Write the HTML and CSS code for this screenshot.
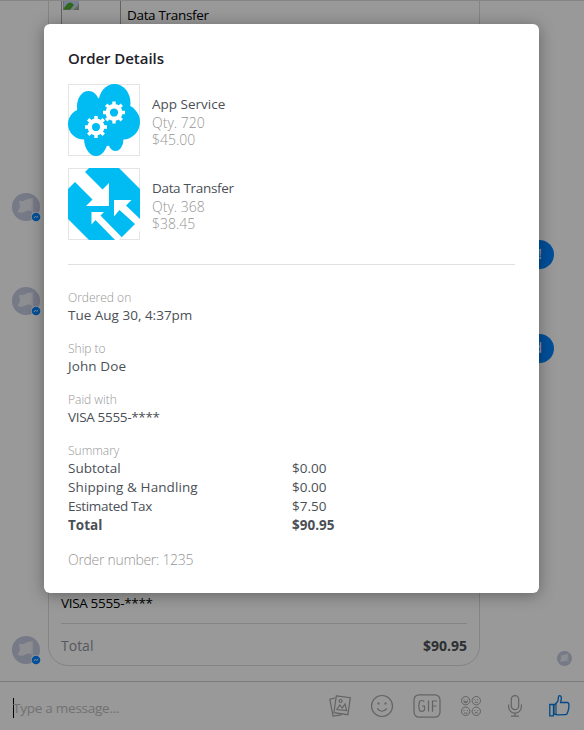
FILE: index.html
```html
<!DOCTYPE html>
<html lang="en">
<head>
<meta charset="utf-8">
<title>Order Details</title>
<link rel="stylesheet" href="styles.css">
</head>
<body>
<svg class="defs" width="0" height="0" aria-hidden="true">
  <defs>
    <symbol id="bot" viewBox="0 0 28 28">
      <circle cx="14" cy="14" r="14" fill="#c5cae0"/>
      <path d="M7 7.500q4 1.500 6.500-.5t6-1.500l1 .5-1 12.500q-3-2-6 0t-8 .5l2.500-5z" fill="#ebedf3"/>
      <path d="M20.500 5v17.500" stroke="#dfe2ec" stroke-width="1.400"/>
    </symbol>
    <symbol id="badge" viewBox="0 0 10 10">
      <circle cx="5" cy="5" r="5" fill="#fff"/>
      <circle cx="5" cy="5" r="4.300" fill="#0084ff"/>
      <path d="M2.800 6.100 4.500 4.200l1.200 1.200 1.600-1.300" fill="none" stroke="#fff" stroke-width=".9"/>
    </symbol>
    <g id="gear">
      <circle r="6.300" fill="none" stroke="#fff" stroke-width="4.400"/>
      <g stroke="#fff" stroke-width="3.400">
        <path d="M0-11v4M0 11V7M-11 0h4M11 0H7"/>
        <path d="M0-11v4M0 11V7M-11 0h4M11 0H7" transform="rotate(45)"/>
      </g>
    </g>
  </defs>
</svg>
<div class="app">
  <main class="thread">
    <div class="row first">
      <div class="avatar"><svg class="face"><use href="#bot"/></svg><svg class="mark"><use href="#badge"/></svg></div>
      <div class="card card-top">
        <div class="card-item">
          <div class="missing"><svg width="16" height="16" viewBox="0 0 16 16"><path d="M0 0h16v10L10 16H0z" fill="#c6d7f5"/><path d="M0 16Q6 4 11 11l-4 5z" fill="#4fad31"/><path d="M16 10v6h-6z" fill="#9bb391"/><path d="M0 0v16h7M16 9v7h-5" fill="none" stroke="#999"/></svg></div>
          <span class="tight">Data Transfer</span>
        </div>
      </div>
    </div>
    <div class="row sent"><div class="bubble">Thanks!</div></div>
    <div class="row middle">
      <div class="avatar"><svg class="face"><use href="#bot"/></svg><svg class="mark"><use href="#badge"/></svg></div>
    </div>
    <div class="row sent"><div class="bubble">Send</div></div>
    <div class="row last">
      <div class="avatar"><svg class="face"><use href="#bot"/></svg><svg class="mark"><use href="#badge"/></svg></div>
      <div class="card card-bottom">
        <div class="card-pay tight">VISA 5555-****</div>
        <div class="card-total"><span>Total</span><b>$90.95</b></div>
      </div>
      <svg class="seen"><use href="#bot"/></svg>
    </div>
  </main>
  <footer class="composer">
    <div class="input">Type a message...</div>
    <div class="tools">
      <svg width="22" height="22" viewBox="0 0 22 22" class="line"><path d="M6 3 .8 4.200 4 21l8.500-1.200"/><path d="m7.300.8 14 1.900-2.400 17-14-2z"/><circle cx="11.600" cy="6" r="1.500"/><path d="m7.800 14.500 3-4.500 2.400 3 2.800-4 1.700 6.500z"/></svg>
      <svg width="22" height="22" viewBox="0 0 22 22" class="line"><circle cx="11" cy="11" r="10.500"/><path d="M6.200 13.500q4.800 5.500 9.600 0"/><path d="M7.500 7.400v2M14.500 7.400v2" stroke-width="2"/></svg>
      <svg width="28" height="24" viewBox="0 0 28 24" class="line"><rect x="1" y=".8" width="26" height="22.400" rx="5"/><path d="M11.300 7.500Q8.500 5.500 6.500 7.500q-1.500 4.500 0 9 2.500 2 5-.5v-4H9M15.500 6.500v11M19.500 17.800V7H24M19.500 12h4"/></svg>
      <svg width="20" height="20" viewBox="0 0 20 20" class="line thin"><circle cx="4.700" cy="4.700" r="4.200"/><circle cx="15.300" cy="4.700" r="4.200"/><circle cx="4.700" cy="15.300" r="4.200"/><circle cx="15.300" cy="15.300" r="4.200"/><path d="M3 3.400v1M6.400 3.400v1M2.800 5.700h3.800q-1.900 2.600-3.800 0M13.500 3.500l1 .8M17 3.500l-1 .8M13.700 6.800q1.600-1.600 3.200 0M3 14v1M6.400 14v1M3 16.800q1.700 1 3.400 0M13.700 14v1M17 14v1M13.600 17.200q1.700-1.800 3.400 0"/></svg>
      <svg width="14" height="22" viewBox="0 0 14 22" class="line mic"><rect x="3.300" y=".6" width="7.400" height="14" rx="3.700"/><path d="M.6 9.500v2.300a6.400 6.400 0 0 0 12.800 0V9.500M7 18.200v3M3 21.200h8"/></svg>
      <svg width="21" height="22" viewBox="0 0 21 22" class="like"><path class="palm" d="M5 10.200 8 7.500V19.800L5 18.800z"/><path d="M.8 9.500h3.700v11.300H.8z"/><path d="M5 10.200 8.800 6.500 9.500 2q.1-1.400 1.200-1.300 1.800.1 1.600 3L11.600 7.500h6.700q2 .4 1.500 2.500.7 1.200-.2 2.500.6 1.400-.5 2.600.4 1.500-.7 2.400-.2 2.200-1.800 2.200L8 19.800 5 18.800"/></svg>
    </div>
  </footer>
</div>
<div class="overlay">
  <section class="dialog">
    <h1>Order Details</h1>
    <div class="product">
      <svg class="thumb" viewBox="0 0 72 72">
        <g fill="#00bcf2"><ellipse cx="20.500" cy="22" rx="11.500" ry="15"/><ellipse cx="46.500" cy="19" rx="16" ry="19"/><ellipse cx="55" cy="38" rx="17" ry="17.500"/><ellipse cx="16" cy="40" rx="16" ry="15.500"/><ellipse cx="28" cy="54" rx="12" ry="18"/><ellipse cx="47.500" cy="55" rx="8" ry="12"/><path d="M31 14 62 19 55 55 40 62 17 55 9 25z"/></g>
        <use href="#gear" transform="translate(28 43)"/>
        <use href="#gear" transform="translate(46 28.500)"/>
      </svg>
      <div class="info"><div class="name">App Service</div><div>Qty. 720</div><div>$45.00</div></div>
    </div>
    <div class="product">
      <svg class="thumb" viewBox="0 0 72 72">
        <path d="M21 0h30l21 21v30L51 72H21L0 51V21z" fill="#00bcf2"/>
        <path d="M5 12 24.500 31.500 18 38h23V15l-6.500 6.500L14 1zM46 32h17.500L58 37.500 72 51v13l-5-8-15.500-14L46 48.500zM23.500 44H36l-3.500 3.500L54 69.500 49 74l-21.500-22-4 4.500z" fill="#fff"/>
      </svg>
      <div class="info"><div class="name tight">Data Transfer</div><div>Qty. 368</div><div>$38.45</div></div>
    </div>
    <div class="details">
      <dl><dt>Ordered on</dt><dd>Tue Aug 30, 4:37pm</dd></dl>
      <dl><dt>Ship to</dt><dd class="wide">John Doe</dd></dl>
      <dl><dt>Paid with</dt><dd class="tight">VISA 5555-****</dd></dl>
      <div class="label">Summary</div>
      <div class="summary">
        <span>Subtotal</span><span>$0.00</span>
        <span class="wide">Shipping &amp; Handling</span><span>$0.00</span>
        <span class="tight">Estimated Tax</span><span>$7.50</span>
        <b>Total</b><b>$90.95</b>
      </div>
      <div class="number">Order number: 1235</div>
    </div>
  </section>
</div>
</body>
</html>
```
FILE: styles.css
```css
* { box-sizing: border-box; }
body { margin: 0; font: 14px/18px "Open Sans", "Noto Sans", sans-serif; color: #000; background: #fff; }
.defs { position: absolute; }
.app { height: 730px; display: flex; flex-direction: column; overflow: hidden; border-top: 1px solid #dcdcdc; }
.thread { flex: none; height: 680px; padding: 0 12px 14px; }
.row { display: flex; align-items: flex-end; gap: 8px; }
.first { height: 221px; }
.first .avatar { margin-bottom: 1px; }
.last .avatar { margin-bottom: 2px; }
.sent { justify-content: flex-end; padding-right: 18px; margin: 18px 0; }
.middle { height: 29px; align-items: flex-start; }
.last { height: 285px; }
.avatar { position: relative; width: 28px; height: 28px; flex: none; }
.face { display: block; width: 28px; height: 28px; }
.mark { position: absolute; right: -1px; bottom: -1px; width: 10px; height: 10px; }
.bubble { height: 29px; padding: 5px 12px; border-radius: 15px; background: #0084ff; color: #fff; }
.card { width: 432px; border: 1px solid #dcdcdc; padding: 0 12px; }
.card-top { height: 221px; border-top: 0; border-radius: 0 0 18px 18px; }
.card-item { display: flex; gap: 6px; line-height: 28px; font-size: 13.500px; }
.missing { width: 60px; height: 40px; border: solid #a5a5a5; border-width: 0 1px; padding-left: 1px; }
.missing svg { display: block; margin-top: -7px; }
.card-bottom { height: 285px; border-radius: 20px; display: flex; flex-direction: column; justify-content: flex-end; }
.card-pay { height: 30px; border-bottom: 1px solid #dcdcdc; line-height: 18px; font-size: 13.500px; }
.card-total { height: 41px; padding-top: 13px; display: flex; justify-content: space-between; color: #90949c; }
.card-total b { color: #4b4f56; }
.seen { width: 15px; height: 15px; margin-left: auto; flex: none; }
.composer { flex: none; height: 49px; border-top: 1px solid #ccc; padding: 0 14px 0 13px; display: flex; align-items: center; justify-content: space-between; }
.input { height: 20px; margin-top: 3px; border-left: 1px solid #000; line-height: 20px; color: #bdbdbd; font-size: 13.500px; letter-spacing: -.25px; text-indent: -1px; }
.tools { display: flex; align-items: center; gap: 20px; }
.tools svg { overflow: visible; }
.tools .mic { margin: 0 7px; }
.line { fill: none; stroke: #a6a6a6; stroke-width: 1.200; }
.thin { stroke-width: 1; }
.like { fill: none; stroke: #0078e0; stroke-width: 1.300; }
.palm { fill: #7ab0e0; stroke: none; }
.overlay { position: absolute; inset: 0; padding: 24px 45px 0 44px; background: rgba(0,0,0,.4); }
.dialog { height: 569px; padding: 22px 24px 24px; background: #fff; border-radius: 6px; box-shadow: 0 2px 16px rgba(0,0,0,.35); color: #4b4f56; }
h1 { margin: 0 0 14px; font-size: 15px; line-height: 24px; font-weight: 600; color: #1d2129; letter-spacing: -.05px; }
.product { display: flex; align-items: center; gap: 12px; height: 72px; margin-bottom: 12px; }
.thumb { width: 72px; height: 72px; background: linear-gradient(#fff, #fff) center / 70px 70px no-repeat #e5e5e5; }
.info { line-height: 17.500px; color: #959595; font-weight: 300; padding-top: 4.500px; }
.name { color: #4b4f56; font-size: 13.500px; font-weight: 400; }
.details { border-top: 1px solid #e0e0e0; margin-top: 24px; padding-top: 24px; }
dl { margin: 0 0 16px; }
dt, .label { height: 17px; font-size: 12px; line-height: 17px; color: #959595; font-weight: 300; }
dd { margin: 0; line-height: 18px; font-size: 13.500px; }
.summary { display: grid; grid-template-columns: 224px 1fr; line-height: 19px; font-size: 13.500px; }
.number { margin-top: 16px; line-height: 18px; color: #959595; font-weight: 300; font-size: 14px; letter-spacing: -.3px; }
.tight { letter-spacing: -.33px; }
.wide { letter-spacing: .1px; }
```
